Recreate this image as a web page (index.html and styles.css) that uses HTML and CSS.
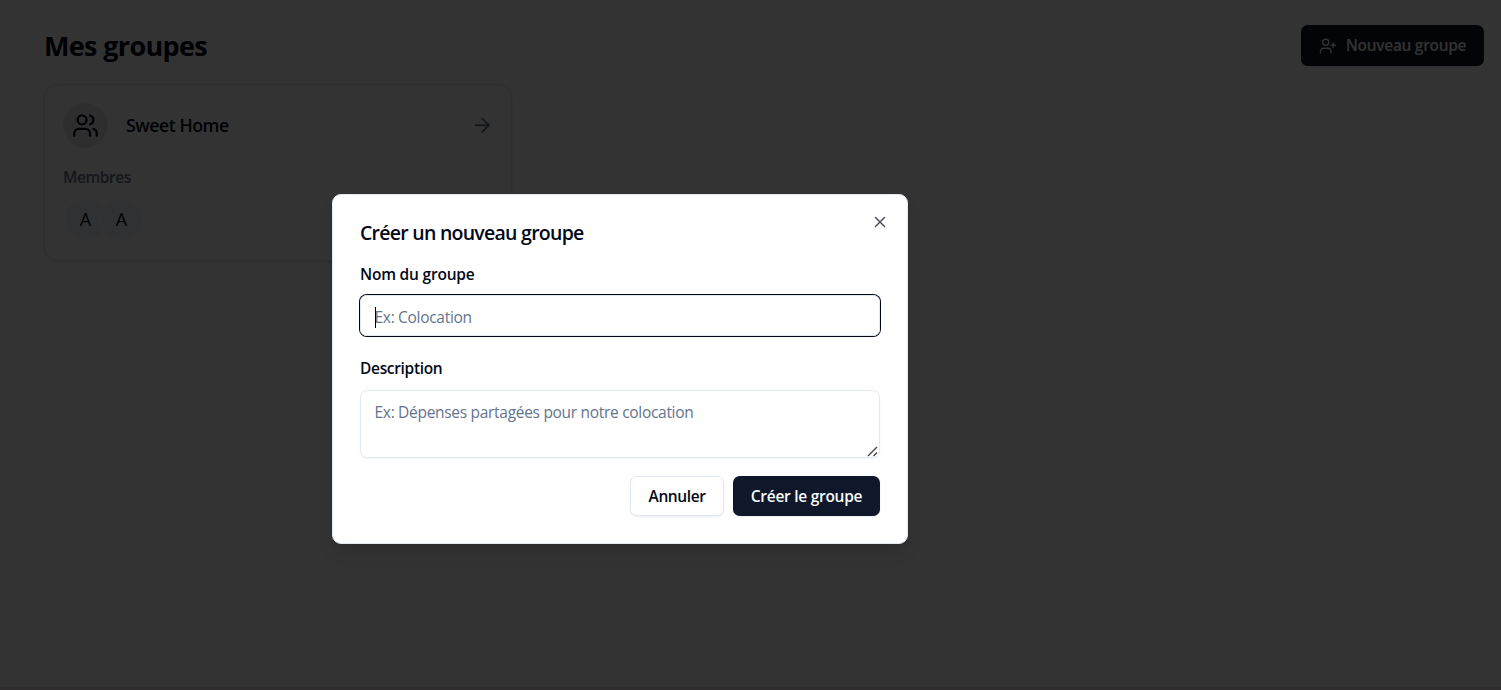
FILE: index.html
```html
<!DOCTYPE html>
<html lang="fr">
<head>
<meta charset="utf-8">
<title>Mes groupes</title>
<link rel="stylesheet" href="styles.css">
</head>
<body>
<main class="page">
  <header class="page-header">
    <h1 class="page-title"><span>Mes groupes</span></h1>
    <button class="btn btn-primary btn-new">
      <svg class="icon-new" viewBox="0 0 24 24"><path d="M16 21v-2a4 4 0 0 0-4-4H6a4 4 0 0 0-4 4v2"/><circle cx="9" cy="7" r="4"/><path d="M19 8v6"/><path d="M22 11h-6"/></svg>
      <span class="t-new">Nouveau groupe</span>
    </button>
  </header>
  <section class="card">
    <div class="card-head">
      <div class="card-icon">
        <svg viewBox="0 0 24 24"><path d="M16 21v-2a4 4 0 0 0-4-4H6a4 4 0 0 0-4 4v2"/><circle cx="9" cy="7" r="4"/><path d="M22 21v-2a4 4 0 0 0-3-3.87"/><path d="M16 3.13a4 4 0 0 1 0 7.75"/></svg>
      </div>
      <h2 class="card-title"><span>Sweet Home</span></h2>
      <svg class="card-arrow" viewBox="0 0 24 24"><path d="M5 12h14"/><path d="m12 5 7 7-7 7"/></svg>
    </div>
    <p class="members-label"><span>Membres</span></p>
    <div class="avatars"><span class="avatar">A</span><span class="avatar">A</span></div>
  </section>
</main>
<div class="overlay"></div>
<div class="dialog" role="dialog">
  <h2 class="dialog-title"><span>Créer un nouveau groupe</span></h2>
  <div class="field">
    <label class="label"><span class="t-name">Nom du groupe</span></label>
    <div class="input focused"><i class="caret"></i><span class="t-ph">Ex: Colocation</span></div>
  </div>
  <div class="field field-desc">
    <label class="label"><span class="t-desc">Description</span></label>
    <div class="input area"><span class="t-ph">Ex: Dépenses partagées pour notre colocation</span>
      <svg class="grip" viewBox="0 0 12 12"><path d="M1 11 10 2M6.5 11 10 7.5"/></svg>
    </div>
  </div>
  <footer class="actions">
    <button class="btn btn-outline"><span class="t-cancel">Annuler</span></button>
    <button class="btn btn-primary btn-create"><span class="t-create">Créer le groupe</span></button>
  </footer>
  <svg class="close" viewBox="0 0 24 24"><path d="M18 6 6 18"/><path d="m6 6 12 12"/></svg>
</div>
</body>
</html>
```
FILE: styles.css
```css
* { box-sizing: border-box; margin: 0; }
body {
  height: 690px;
  overflow: hidden;
  background: #fff;
  color: #020817;
  font: 400 15.5px/22.5px "Open Sans", "Noto Sans", sans-serif;
}
span { white-space: nowrap; }
svg { fill: none; stroke: currentColor; stroke-width: 2; stroke-linecap: round; stroke-linejoin: round; flex: none; }
.page { height: 690px; padding: 25px 17px 0 44px; border-bottom: 3px solid #eadbe2; }
.page-header { display: flex; justify-content: space-between; align-items: center; height: 41px; }
.page-title { font-size: 27px; line-height: 36px; font-weight: 700; letter-spacing: -0.65px; }
.btn {
  display: flex; align-items: center; justify-content: center; gap: 9px;
  height: 40px; padding: 0; border: 0; border-radius: 6.75px; color: #f8fafc;
  font: 600 15.5px/22.5px "Open Sans", "Noto Sans", sans-serif;
  box-shadow: 0 1px 2px rgba(0, 0, 0, .08);
}
.btn-primary { background: #0f172a; }
.btn-new { width: 183px; height: 41px; }
.icon-new { width: 18px; height: 18px; stroke-width: 1.8; }
.card {
  width: 468px; height: 177px; margin-top: 18px; padding: 18px;
  border: 1px solid #e2e8f0; border-radius: 13.5px; box-shadow: 0 1px 3px rgba(0, 0, 0, .1);
}
.card-head { display: flex; align-items: center; gap: 18px; height: 45px; }
.card-icon { display: grid; place-items: center; width: 45px; height: 45px; border-radius: 50%; background: #e7e7e9; }
.card-icon svg { width: 27px; height: 27px; }
.card-title { flex: 1; font-size: 17.7px; font-weight: 600; letter-spacing: -.45px; }
.card-arrow { width: 22.5px; height: 22.5px; color: #64748b; }
.members-label { margin-top: 18px; color: #64748b; font-weight: 600; letter-spacing: -.4px; }
.avatars { display: flex; margin: 9px 0 0 1px; }
.avatar {
  display: grid; place-items: center; width: 43px; height: 43px; margin-right: -7px;
  border: 1.5px solid #fff; border-radius: 50%; background: #f1f5f9; color: #000; font-size: 18px;
}
.overlay { position: absolute; inset: 0; background: rgba(0, 0, 0, .8); }
.dialog {
  position: absolute; left: 332px; top: 194px; width: 576px; height: 350px;
  padding: 27px; border: 1px solid #e2e8f0; border-radius: 9px; background: #fff;
  box-shadow: 0 11px 17px -3px rgba(0, 0, 0, .1), 0 4px 7px -4px rgba(0, 0, 0, .1);
}
.dialog-title { margin-top: -1px; font-size: 19.5px; line-height: 24px; font-weight: 600; letter-spacing: -.74px; }
.field { margin-top: 18px; }
.field-desc { margin-top: 21px; }
.label { display: block; height: 24px; font-weight: 600; }
.input {
  position: relative; height: 41px; margin-top: 8px; padding: 10px 13.5px;
  border: 1px solid #e2e8f0; border-radius: 6.75px; color: #64748b;
  box-shadow: 0 1px 2px rgba(0, 0, 0, .05);
}
.focused { box-shadow: 0 0 0 1px #020817; }
.caret { position: absolute; left: 14px; top: 11px; width: 1px; height: 21px; background: #000; }
.area { height: 68px; margin-top: 9px; }
.grip { position: absolute; right: 0; bottom: 0; width: 12px; height: 12px; color: #444; stroke-width: 1.4; stroke-linecap: butt; }
.actions { display: flex; justify-content: flex-end; gap: 9px; margin-top: 18px; }
.btn-outline { width: 94px; background: #fff; color: #020817; border: 1px solid #e2e8f0; }
.btn-create { width: 147px; }
.close { position: absolute; right: 18px; top: 17.5px; width: 18px; height: 18px; opacity: .7; }
.t-new { letter-spacing: -.3px; }
.t-name { letter-spacing: -.2px; }
.t-desc { letter-spacing: -.33px; }
.t-ph { letter-spacing: -.3px; }
.t-cancel { letter-spacing: -.4px; }
.t-create { letter-spacing: -.27px; }
```
